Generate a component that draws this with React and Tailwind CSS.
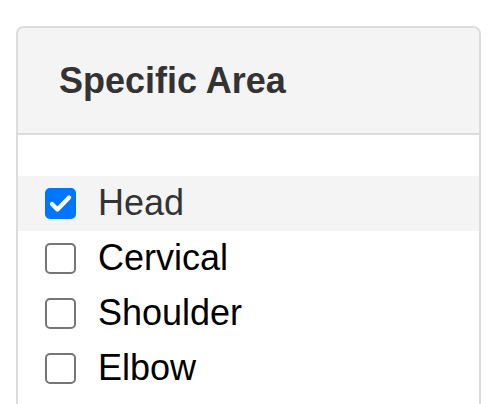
import React from 'react';

const areas = [
  { name: 'Head', checked: true },
  { name: 'Cervical', checked: false },
  { name: 'Shoulder', checked: false },
  { name: 'Elbow', checked: false },
];

function Box({ checked }) {
  if (checked) {
    return (
      <span className="flex h-[31px] w-[31px] shrink-0 items-center justify-center rounded-[5px] bg-[#0075ff]">
        <svg width="25" height="25" viewBox="0 0 22 22" fill="none">
          <path d="M3.5 11.5l4.8 4.8L18.5 5.8" stroke="#fff" strokeWidth="3.8" strokeLinecap="round" strokeLinejoin="round" />
        </svg>
      </span>
    );
  }
  return <span className="block h-[31px] w-[31px] shrink-0 rounded-[5px] border-[2.5px] border-[#767676] bg-white" />;
}

export default function App() {
  return (
    <div className="min-h-[404px] bg-white pl-[16px] pt-[26px]" style={{ fontFamily: '"Liberation Sans", Arial, sans-serif' }}>
      <div className="w-[465px] overflow-hidden rounded-t-[8px] border-2 border-b-0 border-[#dcdcdc]">
        <div className="flex h-[107px] items-center border-b-2 border-[#dcdcdc] bg-[#f4f4f4] pl-[41px]">
          <h2 className="text-[36px] font-bold leading-none text-[#333]">Specific Area</h2>
        </div>
        <ul className="pt-[41px] pb-[20px]">
          {areas.map((a) => (
            <li
              key={a.name}
              className={`flex h-[55px] items-center gap-[22px] pl-[27px] text-[36px] leading-none ${a.checked ? 'bg-[#f4f4f4] text-[#333]' : 'text-black'}`}
            >
              <Box checked={a.checked} />
              <span className="-mt-[2px]">{a.name}</span>
            </li>
          ))}
        </ul>
      </div>
    </div>
  );
}
